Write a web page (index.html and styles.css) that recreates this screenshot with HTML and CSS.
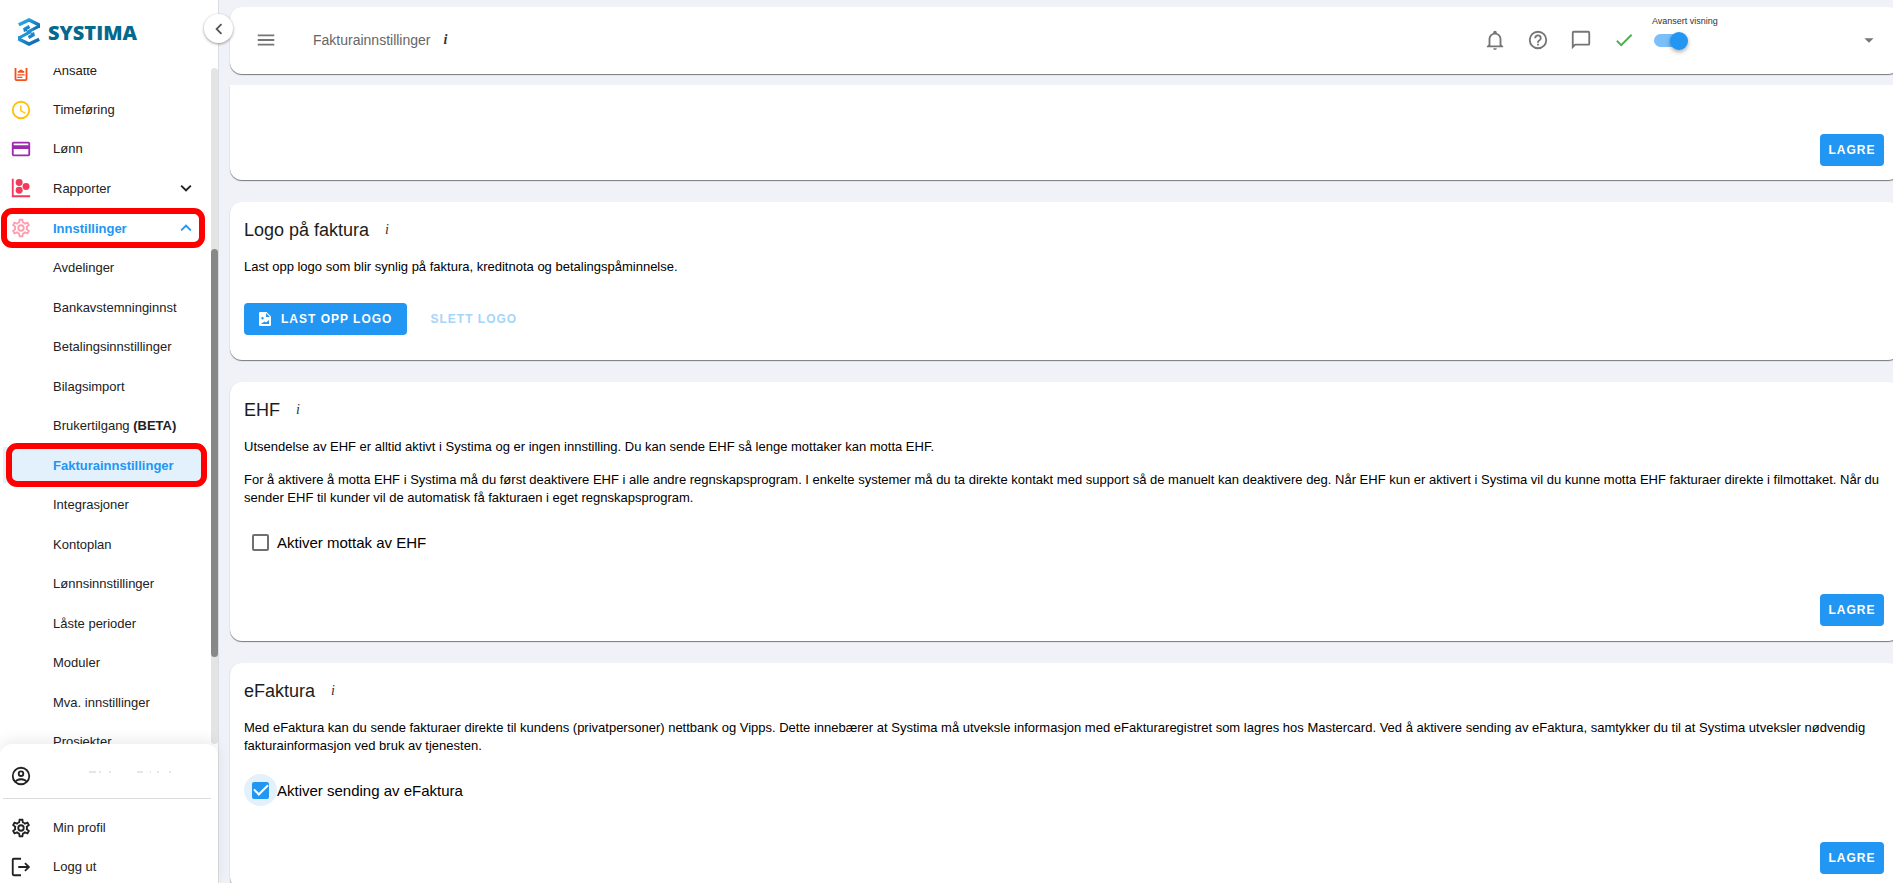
FILE: index.html
```html
<!DOCTYPE html>
<html lang="no">
<head>
    <meta charset="UTF-8">
    <meta name="viewport" content="width=device-width, initial-scale=1.0">
    <title>Systima - Fakturainnstillinger</title>
    <link rel="stylesheet" href="styles.css">
</head>
<body>
    <!-- Shared icons -->
    <svg class="sprite" aria-hidden="true">
        <symbol id="cog" viewBox="0 0 24 24">
            <path d="M12,8A4,4 0 0,1 16,12A4,4 0 0,1 12,16A4,4 0 0,1 8,12A4,4 0 0,1 12,8M12,10A2,2 0 0,0 10,12A2,2 0 0,0 12,14A2,2 0 0,0 14,12A2,2 0 0,0 12,10M10,22C9.75,22 9.54,21.82 9.5,21.58L9.13,18.93C8.5,18.68 7.96,18.34 7.44,17.94L4.95,18.95C4.73,19.03 4.46,18.95 4.34,18.73L2.34,15.27C2.21,15.05 2.27,14.78 2.46,14.63L4.57,12.97L4.5,12L4.57,11L2.46,9.37C2.27,9.22 2.21,8.95 2.34,8.73L4.34,5.27C4.46,5.05 4.73,4.96 4.95,5.05L7.44,6.05C7.96,5.66 8.5,5.32 9.13,5.07L9.5,2.42C9.54,2.18 9.75,2 10,2H14C14.25,2 14.46,2.18 14.5,2.42L14.87,5.07C15.5,5.32 16.04,5.66 16.56,6.05L19.05,5.05C19.27,4.96 19.54,5.05 19.66,5.27L21.66,8.73C21.79,8.95 21.73,9.22 21.54,9.37L19.43,11L19.5,12L19.43,13L21.54,14.63C21.73,14.78 21.79,15.05 21.66,15.27L19.66,18.73C19.54,18.95 19.27,19.04 19.05,18.95L16.56,17.95C16.04,18.34 15.5,18.68 14.87,18.93L14.5,21.58C14.46,21.82 14.25,22 14,22H10M11.25,4L10.88,6.61C9.68,6.86 8.62,7.5 7.85,8.39L5.44,7.35L4.69,8.65L6.8,10.2C6.4,11.37 6.4,12.64 6.8,13.8L4.68,15.36L5.43,16.66L7.86,15.62C8.63,16.5 9.68,17.14 10.87,17.38L11.24,20H12.76L13.13,17.39C14.32,17.14 15.37,16.5 16.14,15.62L18.57,16.66L19.32,15.36L17.2,13.81C17.6,12.64 17.6,11.37 17.2,10.2L19.31,8.65L18.56,7.35L16.15,8.39C15.38,7.5 14.32,6.86 13.12,6.62L12.75,4H11.25Z"/>
        </symbol>
    </svg>

    <div class="layout">
        <aside class="sidebar">
            <a class="logo" href="#">
                <svg class="logo-mark" viewBox="0 0 22 28" aria-hidden="true">
                    <defs>
                        <linearGradient id="top" x1="0" y1="0" x2="1" y2="1">
                            <stop offset="0" stop-color="#2fb4ea"/>
                            <stop offset="0.500" stop-color="#1b86cc"/>
                            <stop offset="1" stop-color="#0a5ba6"/>
                        </linearGradient>
                        <linearGradient id="bottom" x1="0" y1="0" x2="1" y2="1">
                            <stop offset="0" stop-color="#2aa6e2"/>
                            <stop offset="1" stop-color="#0e62b0"/>
                        </linearGradient>
                    </defs>
                    <g fill="none" stroke-width="3.400">
                        <path stroke="url(#top)" d="M.800 6.800L11 2l9.300 4.600v2.200L8 15.200l-1-4.200 4.500-2.500"/>
                        <path stroke="url(#bottom)" d="M21.200 21.200L11 26l-9.300-4.600v-2.200L14 12.800l1 4.200-4.500 2.500"/>
                    </g>
                    <path fill="none" stroke="#fff" stroke-width="1.300" d="M1 17.300L8.500 13.500M13.500 14.500L21 10.700"/>
                </svg>
                <span class="logo-text">SYSTIMA</span>
            </a>
            <button class="collapse" type="button" aria-label="Skjul meny">
                <svg class="icon" viewBox="0 0 24 24"><path d="M15.400 16.600L10.800 12l4.600-4.600L14 6l-6 6 6 6z"/></svg>
            </button>

            <div class="nav-area">
                <nav class="nav">
                    <ul class="menu">
                        <li><a class="item" href="#">
                            <svg class="icon orange" viewBox="0 0 24 24"><path d="M17 3h-2.500a2.600 2.600 0 0 0-5 0H7a2 2 0 0 0-2 2v16a2 2 0 0 0 2 2h10a2 2 0 0 0 2-2V5a2 2 0 0 0-2-2zM7 21V5h10v16zM8.500 12h1.200a2.400 2.400 0 0 1 4.600 0h1.200v2h-7zM8 15.500h8V17H8zm0 2.700h5.500v1.500H8z"/></svg>
                            <span>Ansatte</span></a></li>
                        <li><a class="item" href="#">
                            <svg class="icon yellow" viewBox="0 0 24 24"><path d="M12 20a8 8 0 0 0 8-8 8 8 0 0 0-8-8 8 8 0 0 0-8 8 8 8 0 0 0 8 8m0-18a10 10 0 0 1 10 10 10 10 0 0 1-10 10A10 10 0 0 1 2 12 10 10 0 0 1 12 2m.500 5v5.200l4.500 2.700-.800 1.300L11 13V7z"/></svg>
                            <span>Timeføring</span></a></li>
                        <li><a class="item" href="#">
                            <svg class="icon purple" viewBox="0 0 24 24"><path d="M20 4H4a2 2 0 0 0-2 2v12a2 2 0 0 0 2 2h16a2 2 0 0 0 2-2V6a2 2 0 0 0-2-2m0 14H4v-6h16zm0-10H4V6h16z"/></svg>
                            <span>Lønn</span></a></li>
                        <li><a class="item" href="#">
                            <svg class="icon red" viewBox="0 0 24 24"><path d="M2 2h2v18h18v2H2z"/><circle cx="10" cy="6" r="3.800"/><circle cx="17.500" cy="10.300" r="3.800"/><circle cx="10" cy="14.500" r="3.800"/></svg>
                            <span>Rapporter</span>
                            <svg class="icon chevron" viewBox="0 0 24 24"><path d="M7.400 8.600L12 13.200l4.600-4.600L18 10l-6 6-6-6z"/></svg></a></li>
                        <li><a class="item open marked" href="#">
                            <svg class="icon pink" viewBox="0 0 24 24"><use href="#cog"/></svg>
                            <span>Innstillinger</span>
                            <svg class="icon chevron" viewBox="0 0 24 24"><path d="M7.400 15.400L12 10.800l4.600 4.600L18 14l-6-6-6 6z"/></svg></a>
                            <ul class="submenu">
                                <li><a class="item" href="#">Avdelinger</a></li>
                                <li><a class="item" href="#">Bankavstemninginnst</a></li>
                                <li><a class="item" href="#">Betalingsinnstillinger</a></li>
                                <li><a class="item" href="#">Bilagsimport</a></li>
                                <li><a class="item" href="#"><span>Brukertilgang <b>(BETA)</b></span></a></li>
                                <li><a class="item active marked" href="#">Fakturainnstillinger</a></li>
                                <li><a class="item" href="#">Integrasjoner</a></li>
                                <li><a class="item" href="#">Kontoplan</a></li>
                                <li><a class="item" href="#">Lønnsinnstillinger</a></li>
                                <li><a class="item" href="#">Låste perioder</a></li>
                                <li><a class="item" href="#">Moduler</a></li>
                                <li><a class="item" href="#">Mva. innstillinger</a></li>
                                <li><a class="item" href="#">Prosjekter</a></li>
                            </ul>
                        </li>
                    </ul>
                </nav>
                <div class="scrollbar"><div class="thumb"></div></div>
            </div>

            <div class="account">
                <a class="item company" href="#" aria-label="Konto">
                    <svg class="icon" viewBox="0 0 24 24"><path d="M12 2a10 10 0 1 0 0 20 10 10 0 0 0 0-20M7.070 18.280c.430-.900 3.050-1.780 4.930-1.780s4.500.880 4.930 1.780A7.900 7.900 0 0 1 12 20a7.900 7.900 0 0 1-4.930-1.720m11.290-1.450c-1.430-1.740-4.900-2.330-6.360-2.330s-4.930.590-6.360 2.330A7.930 7.930 0 0 1 4 12c0-4.410 3.590-8 8-8s8 3.590 8 8c0 1.820-.620 3.500-1.640 4.830M12 6a3.500 3.500 0 1 0 0 7 3.500 3.500 0 0 0 0-7m0 5a1.500 1.500 0 1 1 0-3 1.500 1.500 0 0 1 0 3"/></svg>
                    <svg class="faded-name" viewBox="0 0 120 10" aria-hidden="true"><path d="M36 1h7M46 1h2M56 1h2M84 1h6M97 1h1M104 1h2M116 1h2"/></svg>
                </a>
                <a class="item" href="#">
                    <svg class="icon" viewBox="0 0 24 24"><use href="#cog"/></svg>
                    <span>Min profil</span></a>
                <a class="item" href="#">
                    <svg class="icon" viewBox="0 0 24 24"><path d="M4 2h8v2H4v16h8v2H4a2 2 0 0 1-2-2V4a2 2 0 0 1 2-2zM17 7l5 5-5 5-1.400-1.400L18.200 13H9v-2h9.200l-2.600-2.600z"/></svg>
                    <span>Logg ut</span></a>
            </div>
        </aside>

        <main class="main">
            <header class="topbar">
                <button class="icon-button" type="button" aria-label="Meny">
                    <svg class="icon" viewBox="0 0 24 24"><path d="M3 6h18v2H3zm0 5h18v2H3zm0 5h18v2H3z"/></svg>
                </button>
                <h1 class="page-title">Fakturainnstillinger</h1>
                <span class="info">i</span>
                <div class="tools">
                    <button class="icon-button" type="button" aria-label="Varsler">
                        <svg class="icon" viewBox="0 0 24 24"><path d="M10 21h4a2 2 0 0 1-4 0m11-2v1H3v-1l2-2v-6c0-3.100 2.030-5.830 5-6.710V4a2 2 0 0 1 4 0v.290c2.970.880 5 3.610 5 6.710v6zm-4-8a5 5 0 0 0-10 0v7h10z"/></svg>
                    </button>
                    <button class="icon-button" type="button" aria-label="Hjelp">
                        <svg class="icon" viewBox="0 0 24 24"><path d="M11 18h2v-2h-2zm1-16A10 10 0 1 0 12 22 10 10 0 0 0 12 2m0 18a8 8 0 1 1 0-16 8 8 0 0 1 0 16m0-14a4 4 0 0 0-4 4h2a2 2 0 1 1 4 0c0 2-3 1.750-3 5h2c0-2.250 3-2.500 3-5a4 4 0 0 0-4-4"/></svg>
                    </button>
                    <button class="icon-button" type="button" aria-label="Meldinger">
                        <svg class="icon" viewBox="0 0 24 24"><path d="M20 2H4a2 2 0 0 0-2 2v18l4-4h14a2 2 0 0 0 2-2V4a2 2 0 0 0-2-2m0 14H5.200L4 17.200V4h16z"/></svg>
                    </button>
                    <button class="icon-button green" type="button" aria-label="Status">
                        <svg class="icon" viewBox="0 0 24 24"><path d="M21 7L9 19l-5.500-5.500 1.410-1.410L9 16.170 19.590 5.590z"/></svg>
                    </button>
                </div>
                <div class="view-switch">
                    <label for="advanced">Avansert visning</label>
                    <input class="switch" id="advanced" type="checkbox" role="switch" checked>
                </div>
                <button class="icon-button" type="button" aria-label="Velg firma">
                    <svg class="icon" viewBox="0 0 24 24"><path d="M7 10l5 5 5-5z"/></svg>
                </button>
            </header>

            <div class="content">
                <section class="card first">
                    <div class="actions"><button class="button" type="button">LAGRE</button></div>
                </section>

                <section class="card">
                    <div class="card-head"><h2>Logo på faktura</h2><span class="info">i</span></div>
                    <p>Last opp logo som blir synlig på faktura, kreditnota og betalingspåminnelse.</p>
                    <div class="upload">
                        <button class="button wide" type="button">
                            <svg class="file-icon" viewBox="0 0 12 14" aria-hidden="true"><path fill-rule="evenodd" d="M1 0h6.500L12 4.500V13a1 1 0 0 1-1 1H1a1 1 0 0 1-1-1V1a1 1 0 0 1 1-1zm6 1v4h4zM3.500 5a1.200 1.200 0 1 0 0 2.400 1.200 1.200 0 0 0 0-2.400zM2 12h8V8L7 10.500 5.500 9.500z"/></svg>
                            LAST OPP LOGO
                        </button>
                        <button class="button text" type="button" disabled>SLETT LOGO</button>
                    </div>
                </section>

                <section class="card">
                    <div class="card-head"><h2>EHF</h2><span class="info">i</span></div>
                    <p>Utsendelse av EHF er alltid aktivt i Systima og er ingen innstilling. Du kan sende EHF så lenge mottaker kan motta EHF.</p>
                    <p>For å aktivere å motta EHF i Systima må du først deaktivere EHF i alle andre regnskapsprogram. I enkelte systemer må du ta direkte kontakt med support så de manuelt kan deaktivere deg. Når EHF kun er aktivert i Systima vil du kunne motta EHF fakturaer direkte i filmottaket. Når du sender EHF til kunder vil de automatisk få fakturaen i eget regnskapsprogram.</p>
                    <div class="check-row">
                        <span class="halo"><input class="check" id="ehf" type="checkbox"></span>
                        <label for="ehf">Aktiver mottak av EHF</label>
                    </div>
                    <div class="actions"><button class="button" type="button">LAGRE</button></div>
                </section>

                <section class="card">
                    <div class="card-head"><h2>eFaktura</h2><span class="info">i</span></div>
                    <p>Med eFaktura kan du sende fakturaer direkte til kundens (privatpersoner) nettbank og Vipps. Dette innebærer at Systima må utveksle informasjon med eFakturaregistret som lagres hos Mastercard. Ved å aktivere sending av eFaktura, samtykker du til at Systima utveksler nødvendig fakturainformasjon ved bruk av tjenesten.</p>
                    <div class="check-row">
                        <span class="halo focused"><input class="check" id="efaktura" type="checkbox" checked></span>
                        <label for="efaktura">Aktiver sending av eFaktura</label>
                    </div>
                    <div class="actions"><button class="button" type="button">LAGRE</button></div>
                </section>
            </div>
        </main>
    </div>
</body>
</html>
```
FILE: styles.css
```css
* {
    box-sizing: border-box;
}
body {
    margin: 0;
    font-family: "Liberation Sans", Arial, sans-serif;
    font-size: 13px;
    color: #000;
    background: #f0f2f8;
}
button {
    font-family: inherit;
    cursor: pointer;
}
.sprite {
    display: none;
}
.icon {
    width: 22px;
    height: 22px;
    flex: none;
    fill: currentColor;
}
.orange { color: #f4511e; }
.yellow { color: #ffc107; }
.purple { color: #9c27b0; }
.red { color: #f23a5c; }
.pink { color: #ff9eb0; }

.layout {
    display: flex;
    height: 100vh;
    overflow: hidden;
}

/* Sidebar */
.sidebar {
    position: relative;
    z-index: 2;
    flex: none;
    width: 219px;
    display: flex;
    flex-direction: column;
    background: #fff;
    border-right: 1px solid #dcdde2;
}
.logo {
    flex: none;
    display: flex;
    align-items: center;
    gap: 8px;
    height: 68px;
    padding: 0 18px 4px;
    text-decoration: none;
}
.logo-mark {
    width: 22px;
    height: 28px;
}
.logo-text {
    font-family: "Open Sans", sans-serif;
    font-size: 20px;
    font-weight: 800;
    color: #04698f;
}
.collapse {
    position: absolute;
    top: 14px;
    right: -15px;
    width: 29px;
    height: 29px;
    padding: 0;
    display: flex;
    align-items: center;
    justify-content: center;
    border: 0;
    border-radius: 50%;
    background: #fff;
    color: #555;
    box-shadow: 0 1px 3px rgba(0, 0, 0, 0.4);
}
.nav-area {
    flex: 1;
    min-height: 0;
    display: flex;
}
.nav {
    flex: 1;
    overflow: hidden;
}
.menu,
.submenu {
    list-style: none;
    margin: 0;
    padding: 0;
}
/* list is scrolled a little past its first row */
.menu {
    margin-top: -17px;
}
.item {
    position: relative;
    display: flex;
    align-items: center;
    gap: 21px;
    height: 39px;
    padding: 0 14px 0 10px;
    color: #222;
    text-decoration: none;
}
.menu > li:nth-child(n+4) > .item,
.submenu > li:nth-child(even) > .item {
    height: 40px;
}
.submenu .item {
    padding-left: 53px;
}
.chevron {
    margin-left: auto;
}
.item.open {
    color: #2196f3;
    font-weight: bold;
}
.submenu .item.active {
    padding: 2px 6px 2px 3px;
    color: #2196f3;
    font-weight: bold;
    text-indent: 50px;
    background: #e3f1fd content-box;
}
.item.marked::after {
    content: "";
    position: absolute;
    inset: 0 6px 0 1px;
    border: 6px solid #f00;
    border-radius: 11px;
}
.item.active.marked::after {
    inset: -2px 4px -2px 6px;
}
.scrollbar {
    width: 7px;
    padding-top: 181px;
    border-radius: 4px;
    background: #e4e4e4;
}
.thumb {
    height: 408px;
    border-radius: 4px;
    background: #888;
}
.account {
    flex: none;
    position: relative;
    padding-top: 10px;
    margin-bottom: -3px;
    border-radius: 12px 12px 0 0;
    background: #fff;
    box-shadow: 0 -4px 14px rgba(0, 0, 0, 0.08);
}
.item.company {
    height: 45px;
    margin: 0 7px 9px 3px;
    padding: 0 0 0 7px;
    border-bottom: 1px solid #ddd;
}
.faded-name {
    width: 120px;
    height: 10px;
    fill: none;
    stroke: #ccc;
}

/* Main area */
.main {
    flex: 1;
    min-width: 0;
    display: flex;
    flex-direction: column;
    padding: 7px 0 0 11px;
    margin-right: -7px;
}
.topbar {
    flex: none;
    display: flex;
    align-items: center;
    height: 67px;
    padding: 0 20px 2px 25px;
    border-radius: 12px;
    background: #fff;
    color: #666;
    box-shadow: 0 1px 1px rgba(0, 0, 0, 0.5);
}
.icon-button {
    display: flex;
    padding: 0;
    border: 0;
    background: none;
    color: #757575;
}
.icon-button.green {
    color: #4caf50;
}
.page-title {
    margin: 0 13px 0 36px;
    font-size: 14px;
    font-weight: normal;
}
.info {
    font-family: "Liberation Serif", serif;
    font-size: 14px;
    font-style: italic;
    font-weight: bold;
    color: #333;
}
.tools {
    display: flex;
    gap: 21px;
    margin-left: auto;
}
.view-switch {
    display: flex;
    flex-direction: column;
    gap: 5px;
    width: 70px;
    margin: 0 136px 14px 17px;
    font-size: 9px;
    line-height: 12px;
    color: #333;
    white-space: nowrap;
}
.switch {
    appearance: none;
    position: relative;
    width: 34px;
    height: 18px;
    margin: 0 0 0 2px;
}
.switch::before {
    content: "";
    position: absolute;
    inset: 2px 4px 3px 0;
    border-radius: 7px;
    background: #7abff8;
}
.switch::after {
    content: "";
    position: absolute;
    top: 0;
    right: 0;
    width: 18px;
    height: 18px;
    border-radius: 50%;
    background: #2196f3;
    box-shadow: 0 2px 4px rgba(0, 0, 0, 0.35);
}
.content {
    flex: 1;
    min-height: 0;
    display: flex;
    flex-direction: column;
    gap: 22px;
    margin: 11px 0 0 -4px;
    padding-left: 4px;
    overflow: hidden;
}
.card {
    flex: none;
    padding: 16px 16px 15px 14px;
    border-radius: 12px;
    background: #fff;
    box-shadow: 0 1px 1px rgba(0, 0, 0, 0.5);
}
.card.first {
    padding-top: 13px;
    padding-bottom: 14px;
    border-radius: 0 0 12px 12px;
}
.card-head {
    display: flex;
    align-items: center;
    gap: 16px;
    height: 24px;
    margin-bottom: 16px;
}
h2 {
    margin: 0;
    font-size: 18px;
    font-weight: normal;
    color: #1c1c1c;
}
.card .info {
    font-weight: normal;
}
p {
    margin: 0 0 15px;
    line-height: 18px;
}
.upload {
    display: flex;
    gap: 10px;
    padding: 12px 0 10px;
}
.button {
    display: flex;
    align-items: center;
    justify-content: center;
    gap: 10px;
    min-width: 64px;
    height: 32px;
    padding: 0 8px;
    border: 0;
    border-radius: 4px;
    background: #2196f3;
    color: #fff;
    font-size: 12px;
    font-weight: bold;
    letter-spacing: 1px;
}
.button.wide {
    padding: 0 15px;
}
.button.text {
    padding: 0 13px;
    background: none;
    color: #a6d5fa;
}
.file-icon {
    width: 12px;
    height: 14px;
    fill: #fff;
}
.check-row {
    display: flex;
    align-items: center;
    padding-top: 4px;
    font-size: 15px;
}
.halo {
    display: flex;
    align-items: center;
    justify-content: center;
    width: 33px;
    height: 32px;
    border-radius: 50%;
}
.halo.focused {
    background: #e3f1fd;
}
.check {
    appearance: none;
    width: 17px;
    height: 17px;
    margin: 0;
    border: 2px solid #707070;
    border-radius: 2px;
    background: #fff;
}
.check:checked {
    display: grid;
    place-items: center;
    border-color: #2196f3;
    background: #2196f3;
}
.check:checked::before {
    content: "";
    width: 12px;
    height: 6px;
    margin-bottom: 4px;
    border: solid #fff;
    border-width: 0 0 2px 2px;
    transform: rotate(-45deg);
}
.actions {
    display: flex;
    justify-content: flex-end;
    padding-top: 36px;
}
```
